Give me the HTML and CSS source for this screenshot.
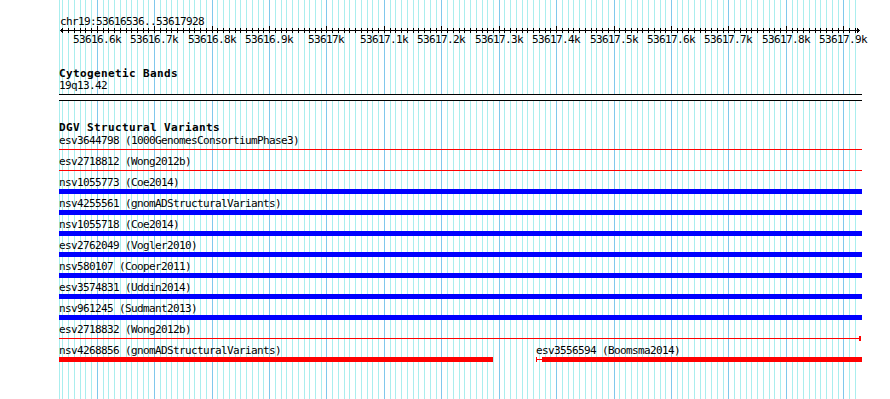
FILE: index.html
```html
<!DOCTYPE html>
<html lang="en">
<head>
    <meta charset="UTF-8">
    <meta name="viewport" content="width=device-width, initial-scale=1.0">
    <title>chr19:53616536..53617928</title>
    <link rel="stylesheet" href="styles.css">
</head>
<body>

<div class="browser">
    <svg class="guides" id="guides" width="890" height="399"></svg>

    <div class="panel">
        <div class="ruler">
            <div class="position">chr19:53616536..53617928</div>
            <svg class="axis" id="axis" width="803" height="8"></svg>
            <div class="tick-labels" id="tickLabels"></div>
        </div>

        <div class="track cyto">
            <div class="track-title">Cytogenetic Bands</div>
            <div class="band-name">19q13.42</div>
            <div class="band"></div>
        </div>

        <div class="track dgv">
            <div class="track-title">DGV Structural Variants</div>
            <div class="rows" id="dgvRows"></div>
        </div>
    </div>
</div>

<script>
    const WIN_START = 53616536;
    const WIN_END = 53617928;
    const PX_PER_BP = 0.5742;
    const ORIGIN = 60.55;      // page x of WIN_START
    const PANEL_LEFT = 59;
    const PANEL_RIGHT = 862;
    const SVG_NS = 'http://www.w3.org/2000/svg';

    function pageX(bp) {
        return Math.floor(ORIGIN + (bp - WIN_START) * PX_PER_BP);
    }

    function rect(svg, x, y, w, h, cls) {
        const r = document.createElementNS(SVG_NS, 'rect');
        r.setAttribute('x', x);
        r.setAttribute('y', y);
        r.setAttribute('width', w);
        r.setAttribute('height', h);
        r.setAttribute('class', cls);
        svg.appendChild(r);
    }

    // guidelines every 10bp, darker every 100bp
    const guides = document.getElementById('guides');
    const axis = document.getElementById('axis');
    const tickLabels = document.getElementById('tickLabels');

    rect(guides, PANEL_LEFT, 0, 1, 399, 'guide'); // left edge of the data area

    for (let bp = 53616540; bp <= 53617920; bp += 10) {
        const x = pageX(bp);
        const major = bp % 100 === 0;
        rect(guides, x, 0, 1, 399, major ? 'guide major' : 'guide');
        rect(axis, x - PANEL_LEFT, major ? 0 : 2, 1, major ? 7 : 5, 'ink');

        if (major) {
            const label = document.createElement('span');
            label.className = 'tick-label';
            label.style.left = (x - PANEL_LEFT) + 'px';
            label.textContent = (bp / 1000) + 'k';
            tickLabels.appendChild(label);
        }
    }

    // base line with arrows at both ends
    rect(axis, 1, 4, 800, 1, 'ink');
    rect(axis, 2, 3, 1, 3, 'ink');
    rect(axis, 3, 2, 1, 5, 'ink');
    rect(axis, 799, 3, 1, 3, 'ink');
    rect(axis, 798, 2, 1, 5, 'ink');

    // DGV features, one array per row
    const FAR_LEFT = 53610000, FAR_RIGHT = 53620000;
    const dgv = [
        [{ name: 'esv3644798', src: '1000GenomesConsortiumPhase3', type: 'loss', start: FAR_LEFT, end: FAR_RIGHT, thin: true }],
        [{ name: 'esv2718812', src: 'Wong2012b', type: 'loss', start: FAR_LEFT, end: FAR_RIGHT, thin: true }],
        [{ name: 'nsv1055773', src: 'Coe2014', type: 'gain', start: FAR_LEFT, end: FAR_RIGHT }],
        [{ name: 'nsv4255561', src: 'gnomADStructuralVariants', type: 'gain', start: FAR_LEFT, end: FAR_RIGHT }],
        [{ name: 'nsv1055718', src: 'Coe2014', type: 'gain', start: FAR_LEFT, end: FAR_RIGHT }],
        [{ name: 'esv2762049', src: 'Vogler2010', type: 'gain', start: FAR_LEFT, end: FAR_RIGHT }],
        [{ name: 'nsv580107', src: 'Cooper2011', type: 'gain', start: FAR_LEFT, end: FAR_RIGHT }],
        [{ name: 'esv3574831', src: 'Uddin2014', type: 'gain', start: FAR_LEFT, end: FAR_RIGHT }],
        [{ name: 'nsv961245', src: 'Sudmant2013', type: 'gain', start: FAR_LEFT, end: FAR_RIGHT }],
        [{ name: 'esv2718832', src: 'Wong2012b', type: 'loss', start: FAR_LEFT, end: 53617927, thin: true }],
        [
            { name: 'nsv4268856', src: 'gnomADStructuralVariants', type: 'loss', start: FAR_LEFT, end: 53617290 },
            { name: 'esv3556594', src: 'Boomsma2014', type: 'loss', start: 53617365, thickStart: 53617375, end: FAR_RIGHT }
        ]
    ];

    function addBox(parent, cls, x1, x2) {
        const a = Math.max(x1, PANEL_LEFT);
        const b = Math.min(x2, PANEL_RIGHT);
        if (b <= a) return;
        const box = document.createElement('div');
        box.className = cls;
        box.style.left = (a - PANEL_LEFT) + 'px';
        box.style.width = (b - a) + 'px';
        parent.appendChild(box);
    }

    const rowsEl = document.getElementById('dgvRows');
    dgv.forEach(row => {
        const labels = document.createElement('div');
        labels.className = 'row-labels';
        const feats = document.createElement('div');
        feats.className = 'row-feats';

        row.forEach(f => {
            const x1 = pageX(f.start);
            const x2 = pageX(f.end);
            const cls = 'feat ' + f.type;

            const label = document.createElement('span');
            label.className = 'feat-label';
            label.style.left = (Math.max(x1, PANEL_LEFT) - PANEL_LEFT) + 'px';
            label.textContent = f.name + ' (' + f.src + ')';
            labels.appendChild(label);

            const startIn = f.start >= WIN_START;
            const endIn = f.end <= WIN_END;

            if (f.thin) {
                addBox(feats, cls + ' thin', x1, endIn ? x2 + 2 : x2);
            } else {
                const t1 = f.thickStart ? pageX(f.thickStart) : x1;
                if (t1 > x1) addBox(feats, cls + ' thin', x1, t1);
                addBox(feats, cls + ' thick', t1, x2);
            }
            if (startIn) addBox(feats, cls + ' cap', x1, x1 + 1);
            if (endIn && f.thin) addBox(feats, cls + ' cap', x2, x2 + 2);
        });

        rowsEl.appendChild(labels);
        rowsEl.appendChild(feats);
    });
</script>

</body>
</html>
```

FILE: styles.css
```css
body {
    margin: 0;
    background-color: #fff;
    color: #000;
    font-family: "DejaVu Sans Mono", monospace;
}
.browser {
    position: relative;
    width: 890px;
    height: 399px;
    overflow: hidden;
}
.guides {
    position: absolute;
    left: 0;
    top: 0;
    shape-rendering: crispEdges;
}
.guide {
    fill: #aaeeee;
}
.guide.major {
    fill: #80c8ec;
}
.panel {
    position: relative;
    margin-left: 59px;
    width: 803px;
}
.ruler {
    padding-top: 17px;
}
.position {
    font-size: 11px;
    line-height: 10px;
    letter-spacing: -0.62px;
    padding-left: 1px;
}
.axis {
    display: block;
    margin-top: -1px;
    shape-rendering: crispEdges;
}
.ink {
    fill: #000;
}
.tick-labels {
    position: relative;
    height: 12px;
}
.tick-label {
    position: absolute;
    top: 0;
    transform: translateX(-50%);
    font-size: 11px;
    line-height: 12px;
    letter-spacing: -0.62px;
    white-space: nowrap;
}
.track-title {
    font-size: 11px;
    font-weight: bold;
    line-height: 12px;
    letter-spacing: 0.38px;
    white-space: nowrap;
}
.cyto .track-title {
    margin-top: 22px;
}
.band-name {
    font-size: 11px;
    line-height: 12px;
    letter-spacing: -0.62px;
}
.band {
    margin-top: 2px;
    height: 5px;
    border-top: 1px solid #000;
    border-bottom: 1px solid #000;
    background-color: #fff;
}
.dgv .track-title {
    margin-top: 21px;
}
.rows {
    padding-top: 1px;
}
.row-labels {
    position: relative;
    height: 12px;
}
.feat-label {
    position: absolute;
    top: 0;
    font-size: 11px;
    line-height: 12px;
    letter-spacing: -0.62px;
    white-space: nowrap;
}
.row-feats {
    position: relative;
    height: 9px;
}
.feat {
    position: absolute;
}
.feat.thin {
    top: 2px;
    height: 1px;
}
.feat.thick,
.feat.cap {
    top: 0;
    height: 5px;
}
.feat.gain {
    background-color: #0000ff;
}
.feat.loss {
    background-color: #ff0000;
}
```
